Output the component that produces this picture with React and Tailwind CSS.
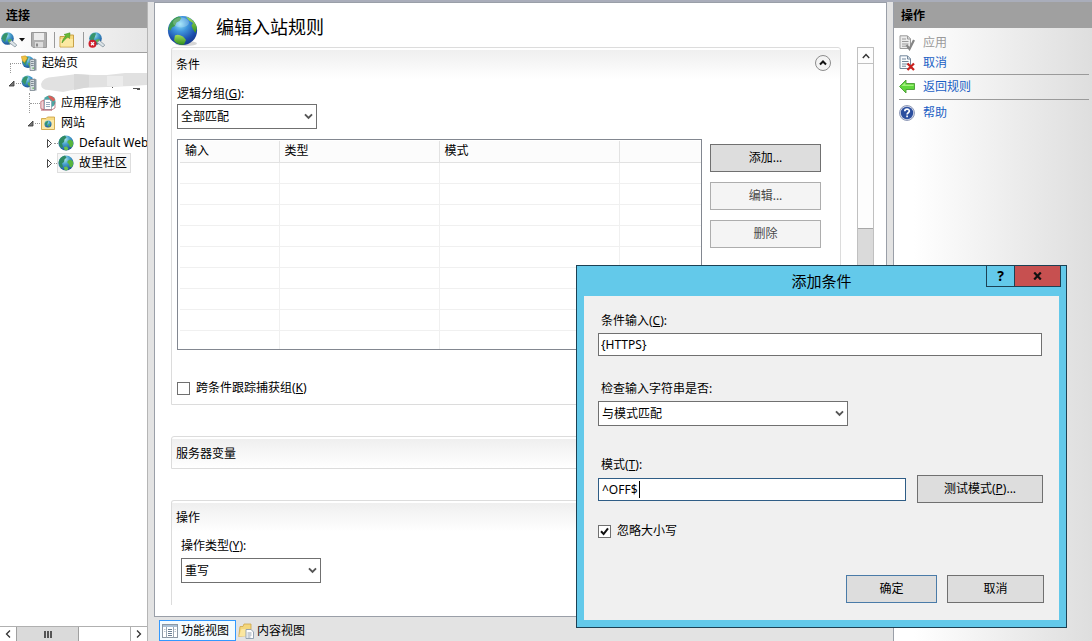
import React from "react";

function Globe({ className }) {
  return (
    <svg className={className} viewBox="0 0 32 32" aria-hidden="true">
      <defs>
        <radialGradient id="sea" cx="0.42" cy="0.28" r="0.75">
          <stop offset="0" stopColor="#8fe0f8" />
          <stop offset="0.35" stopColor="#3f95dc" />
          <stop offset="0.75" stopColor="#1d4fae" />
          <stop offset="1" stopColor="#15388c" />
        </radialGradient>
        <linearGradient id="land" x1="0" y1="0" x2="0" y2="1">
          <stop offset="0" stopColor="#a4dc5a" />
          <stop offset="1" stopColor="#2f8f1f" />
        </linearGradient>
      </defs>
      <ellipse cx="19" cy="28.5" rx="11" ry="2.5" fill="#000" opacity="0.16" />
      <circle cx="15.5" cy="15.5" r="14.6" fill="url(#sea)" />
      <path d="M3 8.5C5 4.500 8.500 2 12 1.400L14.500 3 12.500 6 9.500 7.500 8 11 5 12.500 3.500 15.500 1.200 14.500Z" fill="#3f9b50" />
      <path d="M19 1.800C25 3.500 29 8 29.900 13L28.500 18 26 14.500 24.500 10.500 26 8 22 5.500Z" fill="url(#land)" />
      <path d="M8 20.500C12 18.500 16 21 19 25L17 29.500C13 30.300 9 28.500 7 25.500Z" fill="url(#land)" />
      <ellipse cx="14" cy="7.500" rx="8" ry="5" fill="#fff" opacity="0.22" />
    </svg>
  );
}

function SmallSea() {
  return (
    <defs>
      <radialGradient id="small-sea" cx="0.4" cy="0.25" r="0.8">
        <stop offset="0" stopColor="#b4ecf0" />
        <stop offset="0.4" stopColor="#4aa3cf" />
        <stop offset="0.8" stopColor="#2467a8" />
        <stop offset="1" stopColor="#1d4c86" />
      </radialGradient>
    </defs>
  );
}

function SiteGlobe() {
  return (
    <svg className="size-4 shrink-0" viewBox="0 0 16 16" aria-hidden="true">
      <SmallSea />
      <circle cx="8" cy="8" r="7.600" fill="url(#small-sea)" />
      <path d="M.8 6.500C1.500 3.500 4 1 7 .6L8.500 2.500 6.500 4.500 6 7 4 8.500 5 11.500 3.500 13C1.500 11.500.6 9 .8 6.500Z" fill="#2f8a62" />
      <path d="M9.500 6 12 4.500 14.800 6 15.300 9.500 13.500 12.500 11.500 11.500 11 9 9.500 8Z" fill="#57b53e" />
      <path d="M6 12 9 11.500 10.500 14 8.500 15.500 6.500 15Z" fill="#6cc24a" />
    </svg>
  );
}

function ServerTower() {
  return (
    <>
      <path d="M9 4.500 13.500 3.500 15.500 4.500V15.500H9Z" fill="#8e9aa3" />
      <path d="M9 4.500H13.500V15.500H9Z" fill="#d5dce0" stroke="#75828b" strokeWidth="0.7" />
      <path d="M10 6.500H12.700M10 8.500H12.700M10 10.500H12.700" stroke="#66747d" strokeWidth="0.8" />
      <rect x="11.500" y="12.500" width="1.300" height="1.300" fill="#56b046" />
    </>
  );
}

function MiniGlobe({ cx, cy, r }) {
  return (
    <>
      <SmallSea />
      <circle cx={cx} cy={cy} r={r} fill="url(#small-sea)" />
      <path
        d={`M${cx - r * 0.95} ${cy}Q${cx - r * 0.6} ${cy - r * 1.1} ${cx + r * 0.1} ${cy - r * 0.8}L${cx - r * 0.2} ${cy}L${cx - r * 0.4} ${cy + r * 0.6}Z`}
        fill="#36946c"
      />
      <path d={`M${cx} ${cy + r * 0.2}L${cx + r * 0.7} ${cy + r * 0.1}L${cx + r * 0.3} ${cy + r * 0.9}Z`} fill="#5cb848" />
    </>
  );
}

function HomeIcon() {
  return (
    <svg className="size-4 shrink-0" viewBox="0 0 16 16" aria-hidden="true">
      <MiniGlobe cx={7} cy={7} r={6} />
      <path d="M.3 1.500 4.500.8 6.500 3 3.500 7.500 1.500 6Z" fill="#efc243" stroke="#c78a12" strokeWidth="0.5" />
      <ServerTower />
    </svg>
  );
}

function ServerIcon() {
  return (
    <svg className="size-4 shrink-0" viewBox="0 0 16 16" aria-hidden="true">
      <MiniGlobe cx={6.5} cy={6.5} r={6} />
      <ServerTower />
    </svg>
  );
}

function PoolIcon() {
  return (
    <svg className="size-4 shrink-0" viewBox="0 0 16 16" aria-hidden="true">
      <circle cx="9.500" cy="6.500" r="6" fill="#4aa8a4" />
      <path d="M8 .8C11 .3 14 2 15.300 5L13 6.500 9 3Z" fill="#d9605a" />
      <path d="M.8 6.500 4 5V14.800L.8 13.500Z" fill="#f1d3d7" stroke="#b0525f" strokeWidth="0.7" />
      <path d="M4.500 4.500H9.500L11.500 6.500V14.500H4.500Z" fill="#fff" stroke="#8aa0ae" strokeWidth="0.8" />
      <path d="M6 7.500H10M6 9.500H10M6 11.500H10" stroke="#8ba0b5" strokeWidth="0.9" />
      <path d="M11.500 15 15 13V7" stroke="#b0525f" strokeWidth="0.7" fill="none" />
      <path d="M1 15H12" stroke="#b0525f" />
    </svg>
  );
}

function SitesIcon() {
  return (
    <svg className="size-4 shrink-0" viewBox="0 0 16 16" aria-hidden="true">
      <path d="M1.500 3.500H6L7.500 2H14.500V14.500H1.500Z" fill="#f8dc85" stroke="#c99d3a" strokeWidth="0.8" />
      <rect x="2" y="5" width="12" height="9" fill="#fbe9a8" />
      <MiniGlobe cx={8} cy={9} r={3.5} />
    </svg>
  );
}

function ConnectIcon({ error }) {
  return (
    <svg className="h-4 w-[18px] shrink-0" viewBox="0 0 18 16" aria-hidden="true">
      <MiniGlobe cx={7.5} cy={6.5} r={6.3} />
      <path d="M9 10.500 11.500 8.500 16.800 13 15 15Z" fill="#dbe3e7" stroke="#8796a0" strokeWidth="0.8" />
      {error && (
        <>
          <circle cx="4.500" cy="11.800" r="4" fill="#cf1f2a" />
          <path d="M3 10.300 6 13.300M6 10.300 3 13.300" stroke="#fff" strokeWidth="1.300" />
        </>
      )}
    </svg>
  );
}

function SaveIcon() {
  return (
    <svg className="size-4" viewBox="0 0 16 16" aria-hidden="true">
      <path d="M.5.5H15.500V15.500H2L.5 14Z" fill="#b0b0b0" stroke="#989898" />
      <rect x="3" y="1" width="10" height="7" fill="#ececec" />
      <rect x="4" y="10" width="8" height="5.500" fill="#dcdcdc" />
      <rect x="5" y="11.500" width="2" height="3" fill="#8b8b8b" />
    </svg>
  );
}

function FolderUpIcon() {
  return (
    <svg className="size-4" viewBox="0 0 16 16" aria-hidden="true">
      <path d="M1 4.500H8L9.500 3H14.500V15H1Z" fill="#f7d97d" stroke="#c29a3c" strokeWidth="0.9" />
      <path d="M1.500 7H14V14.500H1.500Z" fill="#fce9a2" />
      <path d="M3 11C3.300 8 5 5.500 7 4L5 2.500 11 .8 10.500 6.500 9 5C6.500 6.500 5 8.500 3 11Z" fill="#64bb35" stroke="#3d8a1c" strokeWidth="0.5" />
    </svg>
  );
}

function ActionDoc({ kind }) {
  const ink = kind === "apply" ? "#9a9a9a" : "#73879b";
  return (
    <svg className="size-4 shrink-0" viewBox="0 0 16 16" aria-hidden="true">
      <path d="M1 .8H8.500L11.500 3.800V13.500H1Z" fill={kind === "apply" ? "#ececec" : "#fafcff"} stroke={ink} />
      <path d="M8.500 1V4H11.500M3 4H7M3 6.500H9.500M3 9H9.500M3 11.200H7" stroke={ink} fill="none" />
      {kind === "apply" ? (
        <path d="M7.500 10 10.500 14 15 5" stroke="#858585" strokeWidth="2.200" fill="none" />
      ) : (
        <path d="M8.500 8.500 15 15M15 8.500 8.500 15" stroke="#c8201e" strokeWidth="2.200" />
      )}
    </svg>
  );
}

function BackIcon() {
  return (
    <svg className="size-4 shrink-0" viewBox="0 0 16 16" aria-hidden="true">
      <path d="M.5 7.500 7 1V4.500H15.500V10.500H7V14Z" fill="#5fd83c" stroke="#4a9a34" strokeWidth="0.9" />
      <path d="M2.500 7 6.300 3.500V5.700H14.500V7Z" fill="#a5f07f" />
    </svg>
  );
}

function HelpIcon() {
  return (
    <svg className="size-4 shrink-0" viewBox="0 0 16 16" aria-hidden="true">
      <circle cx="8" cy="8" r="7.500" fill="#d5dbea" stroke="#7b88aa" strokeWidth="0.8" />
      <circle cx="8" cy="8" r="6.200" fill="#2c4f9f" />
      <path d="M5.800 6.200C5.800 3.500 10.300 3.500 10.300 6.100 10.300 7.700 8.100 7.800 8.100 9.400M8.100 10.600V12.200" stroke="#fff" strokeWidth="1.700" fill="none" />
    </svg>
  );
}

function FeatureViewIcon() {
  return (
    <svg className="size-4 shrink-0" viewBox="0 0 16 16" aria-hidden="true">
      <rect x=".5" y="1.500" width="15" height="13" fill="#fff" stroke="#8c98a4" />
      <path d="M1 2H15V4H1Z" fill="#a9bfd4" />
      <path d="M4.500 4V14.500M11.500 4V14.500" stroke="#9aa8b4" />
      <path d="M6 6.500H10M6 8.500H10M6 10.500H10M6 12.500H10" stroke="#6a7f93" />
      <path d="M2 6.500H3.500M2 8.500H3.500M12.500 6.500H14M12.500 8.500H14" stroke="#b9c4ce" />
    </svg>
  );
}

function ContentViewIcon() {
  return (
    <svg className="size-4 shrink-0" viewBox="0 0 16 16" aria-hidden="true">
      <path d="M2 3.500H5L6 1H13V12L.8 13.500Z" fill="#f3d67c" stroke="#cda64a" strokeWidth="0.8" />
      <path d="M1 13.500 3.500 6H12L10 13Z" fill="#fbe7a0" />
      <path d="M8 6.500H13L15.500 9V15.500H8Z" fill="#fff" stroke="#8a9bad" strokeWidth="0.9" />
      <path d="M9.500 10H13.500M9.500 12H13.500M9.500 14H12.500" stroke="#73879b" strokeWidth="0.8" />
    </svg>
  );
}

function Expanded() {
  return (
    <svg className="size-[9px] shrink-0" viewBox="0 0 9 9" aria-hidden="true">
      <path d="M7 2V7H2Z" fill="#777" stroke="#333" strokeWidth="0.8" />
    </svg>
  );
}

function Collapsed() {
  return (
    <svg className="size-[9px] shrink-0" viewBox="0 0 9 9" aria-hidden="true">
      <path d="M2.500.5 6.500 4.500 2.500 8.500Z" fill="#fff" stroke="#333" strokeWidth="0.9" />
    </svg>
  );
}

function Dropdown({ id, value, className }) {
  return (
    <div className={`relative ${className}`}>
      <select
        id={id}
        defaultValue={value}
        className="h-[25px] w-full appearance-none border border-[#707070] bg-white pr-5 pl-[3px] outline-none"
      >
        <option>{value}</option>
      </select>
      <svg className="pointer-events-none absolute top-[9px] right-1 h-[7px] w-[9px]" viewBox="0 0 9 7" aria-hidden="true">
        <path d="M1 1.300 4.500 4.900 8 1.300" fill="none" stroke="#555" strokeWidth="1.900" />
      </svg>
    </div>
  );
}

function Group({ title, action, className, children }) {
  return (
    <section className={`rounded-t-[3px] border border-[#dcdcdc] bg-white pt-[2px] ${className}`}>
      <div className="flex h-[29px] items-center justify-between bg-gradient-to-b from-[#efefef] to-white pr-[9px] pl-1">
        <h2>{title}</h2>
        {action}
      </div>
      {children}
    </section>
  );
}

function Tree() {
  return (
    <ul className="min-h-0 flex-1 overflow-hidden whitespace-nowrap">
      <li className="flex h-5 items-center pl-[10px]">
        <span className="h-[10px] w-[11px] shrink-0 self-end border-t border-l border-dotted border-[#999]" />
        <HomeIcon />
        <span className="pl-[5px]">起始页</span>
      </li>
      <li>
        <div className="flex h-5 items-center pl-[7px]">
          <Expanded />
          <span className="w-[5px] shrink-0 border-t border-dotted border-[#999]" />
          <ServerIcon />
          <svg className="ml-1 h-5 w-[106px] shrink-0" viewBox="0 0 106 20" aria-hidden="true">
            <path d="M0 11Q2 4 12 4L36 1 52 2H66L84 0H106V12L90 13 66 14 40 15 22 19 8 17Q0 17 0 11Z" fill="#e1e1e1" />
            <path d="M33 1 48 2V14L33 17Z" fill="#d8d8d8" />
            <path d="M66 3H82V13H66Z" fill="#ececec" />
            <path d="M71 15 72 14M92 15.500H99M96 16.500H99" stroke="#555" />
          </svg>
        </div>
        <ul>
          <li className="flex h-5 items-center pl-[29px]">
            <span className="h-5 shrink-0 border-l border-dotted border-[#999]" />
            <span className="w-[10px] shrink-0 border-t border-dotted border-[#999]" />
            <PoolIcon />
            <span className="pl-[5px]">应用程序池</span>
          </li>
          <li>
            <div className="flex h-5 items-center pl-[26px]">
              <Expanded />
              <span className="w-[5px] shrink-0 border-t border-dotted border-[#999]" />
              <SitesIcon />
              <span className="pl-[5px]">网站</span>
            </div>
            <ul>
              <li className="flex h-5 items-center pl-[45px]">
                <Collapsed />
                <span className="w-1 shrink-0 border-t border-dotted border-[#999]" />
                <SiteGlobe />
                <span className="pl-[5px]">Default Web</span>
              </li>
              <li className="flex h-5 items-center pl-[45px]">
                <Collapsed />
                <span className="w-[3px] shrink-0 border-t border-dotted border-[#999]" />
                <div className="flex h-5 items-center border border-[#dedede] bg-[#f7f7f7] pr-[3px]">
                  <SiteGlobe />
                  <span className="pl-[5px]">故里社区</span>
                </div>
              </li>
            </ul>
          </li>
        </ul>
      </li>
    </ul>
  );
}

function Connections() {
  return (
    <aside className="flex w-[147px] shrink-0 flex-col overflow-hidden bg-white">
      <h2 className="flex h-[26px] shrink-0 items-center bg-[#a0a0a0] pt-[2px] pl-[6px] font-bold">连接</h2>
      <div className="flex h-[25px] shrink-0 items-center border-b border-[#a0a0a0] bg-gradient-to-r from-white to-[#e6e6e6]">
        <button aria-label="连接" className="flex items-center">
          <ConnectIcon />
          <svg className="ml-px h-1 w-[6px]" viewBox="0 0 6 4" aria-hidden="true">
            <path d="M0 0H6L3 3.500Z" fill="#111" />
          </svg>
        </button>
        <button aria-label="保存" className="ml-[6px]" disabled>
          <SaveIcon />
        </button>
        <span className="mr-1 ml-[7px] h-4 w-px bg-[#9a9a9a]" />
        <button aria-label="向上">
          <FolderUpIcon />
        </button>
        <span className="mr-1 ml-2 h-4 w-px bg-[#9a9a9a]" />
        <button aria-label="断开连接">
          <ConnectIcon error />
        </button>
      </div>
      <Tree />
      <div className="flex h-[15px] shrink-0 border-t border-[#b0b0b0] bg-white">
        <button aria-label="向左滚动" className="flex w-4 items-center justify-center">
          <svg className="h-2 w-[6px]" viewBox="0 0 6 8"><path d="M5 .5 1.500 4 5 7.500" fill="none" stroke="#333" strokeWidth="1.300" /></svg>
        </button>
        <div className="flex w-[63px] items-center justify-center gap-px border-x border-[#a0a0a0] bg-[#dadada]">
          <span className="h-[7px] w-[2px] bg-[#555]" />
          <span className="h-[7px] w-[2px] bg-[#555]" />
          <span className="h-[7px] w-[2px] bg-[#555]" />
        </div>
        <button aria-label="向右滚动" className="ml-auto flex w-[17px] items-center justify-center border-l border-[#b0b0b0]">
          <svg className="h-2 w-[6px]" viewBox="0 0 6 8"><path d="M1 .5 4.500 4 1 7.500" fill="none" stroke="#333" strokeWidth="1.300" /></svg>
        </button>
      </div>
    </aside>
  );
}

const blankRows = [1, 2, 3, 4, 5, 6, 7, 8];

function ConditionsTable() {
  return (
    <div className="h-[211px] flex-1 overflow-hidden border border-[#828790] bg-white pt-px pl-[2px]">
      <table className="w-full table-fixed border-collapse text-left">
        <thead>
          <tr className="h-[21px] border-b border-[#e2e2e2] bg-[#fcfcfc]">
            <th className="w-[99px] border-r border-[#e2e2e2] pl-[5px] font-normal">输入</th>
            <th className="w-[160px] border-r border-[#e2e2e2] pl-[5px] font-normal">类型</th>
            <th className="w-[180px] border-r border-[#e2e2e2] pl-[5px] font-normal">模式</th>
            <th />
          </tr>
        </thead>
        <tbody>
          {blankRows.map((row) => (
            <tr key={row} className="h-[21px] border-b border-[#f0f0f0]">
              <td className="border-r border-[#f0f0f0]" />
              <td className="border-r border-[#f0f0f0]" />
              <td className="border-r border-[#f0f0f0]" />
              <td />
            </tr>
          ))}
          <tr className="h-[21px]">
            <td className="border-r border-[#f0f0f0]" />
            <td className="border-r border-[#f0f0f0]" />
            <td className="border-r border-[#f0f0f0]" />
            <td />
          </tr>
        </tbody>
      </table>
    </div>
  );
}

function RuleEditor() {
  return (
    <main className="flex min-w-0 flex-1 flex-col">
      <div className="flex min-h-0 flex-1 flex-col border border-[#9a9fa8] bg-white pb-[11px]">
        <header className="flex h-11 shrink-0 items-center gap-[17px] pt-3 pl-3">
          <Globe className="size-8" />
          <h1 className="pb-2 text-lg leading-6">编辑入站规则</h1>
        </header>
        <div className="flex min-h-0 flex-1">
          <div className="min-w-0 flex-1 overflow-hidden pl-4">
            <Group
              title="条件"
              className="h-[358px]"
              action={
                <button aria-label="折叠" className="mb-1 flex size-4 items-center justify-center rounded-full border border-[#8c8c8c] bg-[#f3f3f3]">
                  <svg className="h-[6px] w-2" viewBox="0 0 8 6"><path d="M1 4.500 4 1.500 7 4.500" fill="none" stroke="#111" strokeWidth="2" /></svg>
                </button>
              }
            >
              <div className="pt-[5px] pr-[19px] pl-[5px]">
                <label htmlFor="grouping" className="block h-5 leading-5">逻辑分组(<u>G</u>):</label>
                <Dropdown id="grouping" value="全部匹配" className="w-[140px]" />
                <div className="flex gap-2 pt-[10px]">
                  <ConditionsTable />
                  <div className="flex w-[111px] flex-col gap-[10px] pt-[5px]">
                    <button className="h-7 border border-[#707070] bg-[#dddddd]">添加...</button>
                    <button disabled className="h-7 border border-[#adadad] bg-[#f4f4f4] text-[#4a4a4a]">编辑...</button>
                    <button disabled className="h-7 border border-[#adadad] bg-[#f4f4f4] text-[#4a4a4a]">删除</button>
                  </div>
                </div>
                <label className="mt-[29px] flex h-[18px] items-center gap-[6px]">
                  <input type="checkbox" className="size-[13px] appearance-none border border-[#707070] bg-white" />
                  <span>跨条件跟踪捕获组(<u>K</u>)</span>
                </label>
              </div>
            </Group>
            <Group title="服务器变量" className="mt-[31px]" />
            <Group title="操作" className="mt-[31px] h-[105px] border-b-0">
              <div className="pt-1 pl-[9px]">
                <label htmlFor="action-type" className="block h-[22px] leading-5">操作类型(<u>Y</u>):</label>
                <Dropdown id="action-type" value="重写" className="w-[140px]" />
              </div>
            </Group>
          </div>
          <div className="mr-3 ml-4 flex w-[17px] shrink-0 flex-col border border-[#c0c0c0] bg-[#fdfdfd]">
            <button aria-label="向上滚动" className="flex h-4 shrink-0 items-center justify-center border-b border-[#c0c0c0]">
              <svg className="h-[6px] w-2" viewBox="0 0 8 6"><path d="M.8 5 4 1.500 7.200 5" fill="none" stroke="#333" strokeWidth="1.400" /></svg>
            </button>
            <div className="mt-[164px] h-[120px] border-y border-[#a8a8a8] bg-[#dadada]" />
          </div>
        </div>
      </div>
      <nav className="flex h-6 shrink-0 items-end pl-[5px]">
        <button className="flex h-[21px] items-center gap-[3px] border border-[#3399ff] bg-[#f4fbff] px-[2px] pr-[6px]">
          <FeatureViewIcon />
          功能视图
        </button>
        <button className="flex h-[21px] items-center gap-[3px] px-[2px]">
          <ContentViewIcon />
          内容视图
        </button>
      </nav>
    </main>
  );
}

function Actions() {
  return (
    <aside className="flex w-[199px] shrink-0 flex-col border-l border-[#9a9fa8] bg-gradient-to-r from-white from-10% to-[#dedede]">
      <h2 className="flex h-[26px] shrink-0 items-center bg-[#a0a0a0] pt-[2px] pl-[7px] font-bold">操作</h2>
      <div className="flex flex-col pt-[5px] pr-[3px] pl-[5px] text-[#1a5fc4]">
        <button disabled className="flex h-5 items-center gap-2 text-[#9a9a9a]">
          <ActionDoc kind="apply" />
          应用
        </button>
        <a href="#cancel" className="flex h-5 items-center gap-2">
          <ActionDoc kind="cancel" />
          取消
        </a>
        <hr className="mt-px border-[#9a9a9a]" />
        <a href="#rules" className="flex h-6 items-center gap-2">
          <BackIcon />
          返回规则
        </a>
        <hr className="border-[#9a9a9a]" />
        <a href="#help" className="flex h-[25px] items-center gap-2">
          <HelpIcon />
          帮助
        </a>
      </div>
    </aside>
  );
}

function AddConditionDialog() {
  return (
    <div
      role="dialog"
      aria-labelledby="dialog-title"
      className="absolute top-[263px] right-[25px] w-[491px] border border-[#1c4154] bg-[#63c9ea] px-[7px] pb-[7px]"
    >
      <div className="relative flex h-[30px] items-center justify-center">
        <h2 id="dialog-title" className="text-[15px]">添加条件</h2>
        <div className="absolute -top-px -right-[2px] flex h-[22px] border border-[#1c4154] text-sm font-bold">
          <button aria-label="帮助" className="w-[27px] leading-5">?</button>
          <button aria-label="关闭" className="flex w-[46px] items-center justify-center border-l border-[#1c4154] bg-[#c75050]">
            <svg className="h-2 w-[9px]" viewBox="0 0 9 8"><path d="M1.200.5 7.800 7.500M7.800.5 1.200 7.500" stroke="#111" strokeWidth="2.200" /></svg>
          </button>
        </div>
      </div>
      <form className="flex flex-col bg-[#f0f0f0] px-[14px] pt-[15px] pb-[17px]" onSubmit={(e) => e.preventDefault()}>
        <label htmlFor="cond-input" className="h-[22px] pl-[3px] leading-5">条件输入(<u>C</u>):</label>
        <input
          id="cond-input"
          defaultValue="{HTTPS}"
          className="mr-[3px] h-[23px] border border-[#707070] bg-white px-[2px] outline-none"
        />
        <label htmlFor="cond-check" className="mt-[23px] h-[22px] pl-[3px] leading-5">检查输入字符串是否:</label>
        <Dropdown id="cond-check" value="与模式匹配" className="w-[250px]" />
        <label htmlFor="cond-pattern" className="mt-[29px] h-[20px] pl-[3px] leading-5">模式(<u>T</u>):</label>
        <div className="mr-[2px] flex items-center gap-[11px]">
          <div className="relative flex-1">
            <input
              id="cond-pattern"
              defaultValue="^OFF$"
              className="h-[23px] w-full border border-[#2f5d86] bg-white px-[3px] outline-none"
            />
            <span className="absolute top-[3px] left-[41px] h-[17px] w-px bg-black" />
          </div>
          <button type="button" className="h-7 w-[126px] border border-[#707070] bg-[#dddddd]">测试模式(<u>P</u>)...</button>
        </div>
        <label className="mt-[18px] flex h-5 items-center gap-[6px]">
          <span className="relative flex size-[13px]">
            <input type="checkbox" defaultChecked className="size-[13px] appearance-none border border-[#707070] bg-white" />
            <svg className="pointer-events-none absolute top-[2px] left-[2px] size-[9px]" viewBox="0 0 9 9" aria-hidden="true">
              <path d="M1 4.300 3.600 7 8 1.300" fill="none" stroke="#111" strokeWidth="2" />
            </svg>
          </span>
          忽略大小写
        </label>
        <div className="mt-[34px] mr-px flex justify-end gap-[10px]">
          <button className="h-7 w-[91px] border border-[#4a7ba8] bg-[#dddddd]">确定</button>
          <button type="button" className="h-7 w-[97px] border border-[#707070] bg-[#dddddd]">取消</button>
        </div>
      </form>
    </div>
  );
}

export default function App() {
  return (
    <div className="relative flex h-screen overflow-hidden border-t-2 border-[#a9adba] bg-[#e3e3e3] font-['Noto_Sans','Noto_Sans_CJK_SC',sans-serif] text-xs text-black">
      <Connections />
      <div className="w-[7px] shrink-0 border-l border-[#b5b5b5]" />
      <RuleEditor />
      <div className="w-[6px] shrink-0" />
      <Actions />
      <AddConditionDialog />
    </div>
  );
}
